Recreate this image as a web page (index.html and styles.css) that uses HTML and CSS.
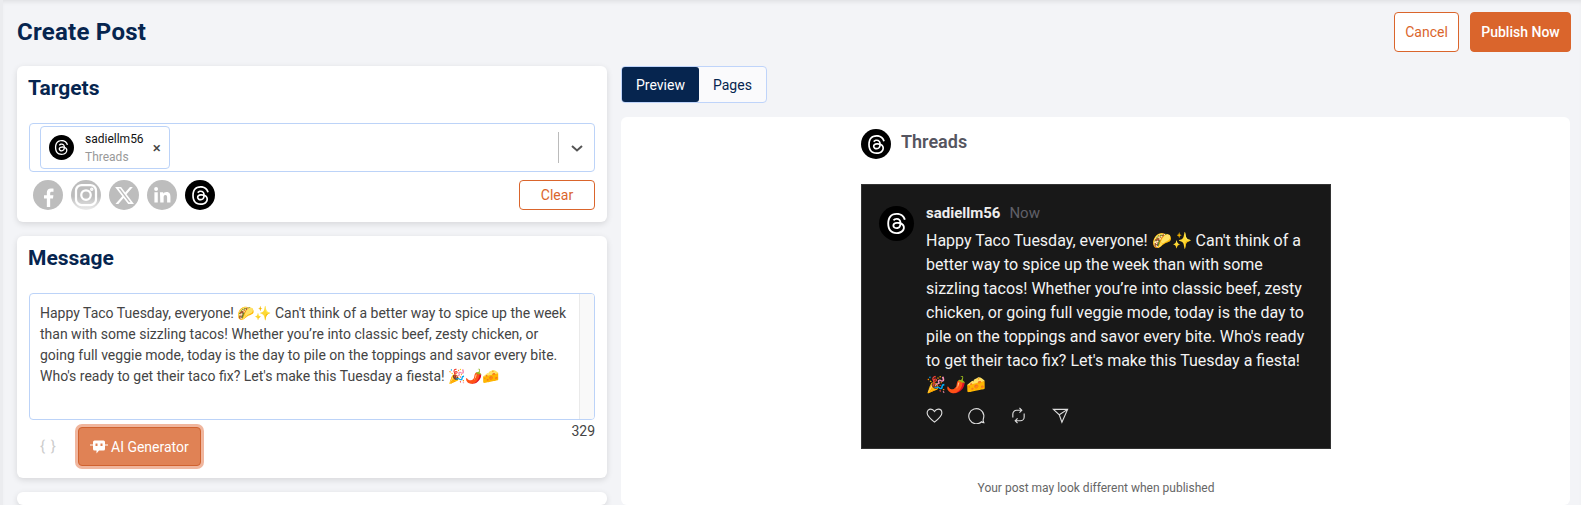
FILE: index.html
```html
<!DOCTYPE html>
<html lang="en">
<head>
  <meta charset="UTF-8" />
  <title>Create Post</title>
  <link rel="stylesheet" href="styles.css">
</head>
<body>
  <svg class="defs" width="0" height="0">
    <symbol id="threads" viewBox="0 0 24 24">
      <path fill="currentColor" d="M12.186 24h-.007c-3.581-.024-6.334-1.205-8.184-3.509C2.35 18.44 1.5 15.586 1.472 12.01v-.017c.03-3.579.879-6.43 2.525-8.482C5.845 1.205 8.6.024 12.18 0h.014c2.746.02 5.043.725 6.826 2.098 1.677 1.29 2.858 3.13 3.509 5.467l-2.04.569c-1.104-3.96-3.898-5.984-8.304-6.015-2.91.022-5.11.936-6.54 2.717C4.307 6.504 3.616 8.914 3.589 12c.027 3.086.718 5.496 2.057 7.164 1.43 1.783 3.631 2.698 6.54 2.717 2.623-.02 4.358-.631 5.8-2.045 1.647-1.613 1.618-3.593 1.09-4.798-.31-.71-.873-1.3-1.634-1.75-.192 1.352-.622 2.446-1.284 3.272-.886 1.102-2.14 1.704-3.73 1.79-1.202.065-2.361-.218-3.259-.801-1.063-.689-1.685-1.74-1.752-2.964-.065-1.19.408-2.285 1.33-3.082.88-.76 2.119-1.207 3.583-1.291a13.853 13.853 0 0 1 3.02.142c-.126-.742-.375-1.332-.75-1.757-.513-.586-1.308-.883-2.359-.89h-.029c-.844 0-1.992.232-2.721 1.32L7.734 7.847c.98-1.454 2.568-2.256 4.478-2.256h.044c3.194.02 5.097 1.975 5.287 5.388.108.046.216.094.321.142 1.49.7 2.58 1.761 3.154 3.07.797 1.82.871 4.79-1.548 7.158-1.85 1.81-4.094 2.628-7.277 2.65Zm1.003-11.69c-.242 0-.487.007-.739.021-1.836.103-2.98.946-2.916 2.143.067 1.256 1.452 1.839 2.784 1.767 1.224-.065 2.818-.543 3.086-3.71a10.5 10.5 0 0 0-2.215-.221z"/>
    </symbol>
  </svg>

  <header class="page-header">
    <h1>Create Post</h1>
    <div class="page-actions">
      <button class="btn btn-outline btn-cancel">Cancel</button>
      <button class="btn btn-solid">Publish Now</button>
    </div>
  </header>

  <main class="columns">
    <section class="left-col">
      <div class="card targets">
        <h2>Targets</h2>
        <div class="select-box">
          <div class="chip">
            <span class="logo logo-chip"><svg><use href="#threads"/></svg></span>
            <span class="chip-text">
              <span class="chip-name">sadiellm56</span>
              <span class="chip-type">Threads</span>
            </span>
            <span class="chip-remove">×</span>
          </div>
          <span class="select-divider"></span>
          <svg class="chevron" width="16" height="16" viewBox="0 0 16 16"><path d="M3 6l5 4.500L13 6" fill="none" stroke="#555" stroke-width="2"/></svg>
        </div>
        <div class="network-row">
          <div class="networks">
            <span class="logo logo-net off icon-fb">
              <svg viewBox="0 0 24 24"><path fill="#fff" d="M13.600 21v-8h2.700l.4-3.200h-3.100V7.900c0-.9.3-1.500 1.600-1.500h1.600V3.500c-.3 0-1.300-.1-2.400-.1-2.400 0-4 1.400-4 4.100v2.300H7.700v3.200h2.700v8z"/></svg>
            </span>
            <span class="logo logo-net off insta">
              <svg viewBox="0 0 24 24" fill="none" stroke="#fff" stroke-width="1.800"><rect x="4" y="4" width="16" height="16" rx="4.500"/><circle cx="12" cy="12" r="3.800"/><circle cx="16.600" cy="7.400" r=".5" fill="#fff"/></svg>
            </span>
            <span class="logo logo-net off icon-x">
              <svg viewBox="0 0 24 24"><path fill="#fff" d="M18.244 2.25h3.308l-7.227 8.26 8.502 11.24H16.17l-5.214-6.817L4.99 21.75H1.68l7.73-8.835L1.254 2.25H8.08l4.713 6.231zm-1.161 17.52h1.833L7.084 4.126H5.117z"/></svg>
            </span>
            <span class="logo logo-net off icon-in">
              <svg viewBox="0 0 24 24"><path fill="#fff" d="M5 9.500h3.100V19H5zM6.550 4.700a1.800 1.800 0 1 1 0 3.600 1.800 1.800 0 0 1 0-3.600zM10.100 9.500h3v1.300c.5-.8 1.500-1.600 3-1.600 3.100 0 3.700 2 3.700 4.700V19h-3.100v-4.500c0-1.100 0-2.500-1.500-2.500s-1.700 1.200-1.700 2.400V19h-3.100z"/></svg>
            </span>
            <span class="logo logo-net"><svg><use href="#threads"/></svg></span>
          </div>
          <button class="btn btn-outline btn-clear">Clear</button>
        </div>
      </div>

      <div class="card message">
        <h2>Message</h2>
        <div class="message-input">
          <div class="message-text">Happy Taco Tuesday, everyone! 🌮✨ Can't think of a better way to spice up the week than with some sizzling tacos! Whether you’re into classic beef, zesty chicken, or going full veggie mode, today is the day to pile on the toppings and savor every bite. Who's ready to get their taco fix? Let's make this Tuesday a fiesta! 🎉🌶️🧀</div>
          <div class="message-track"></div>
        </div>
        <div class="message-tools">
          <span class="braces">{ }</span>
          <button class="btn-ai">
            <svg width="18" height="18" viewBox="0 0 18 18"><path fill="#fff" d="M4.500 2.500h9A1.500 1.500 0 0 1 15 4v7a1.500 1.500 0 0 1-1.500 1.500H9L6.500 15.500v-3h-2A1.500 1.500 0 0 1 3 11V4a1.500 1.500 0 0 1 1.500-1.500z"/><path fill="#e08255" d="M5.500 5.500h2v2.500h-2zM10.500 5.500h2v2.500h-2z"/><path stroke="#fff" stroke-width="1.200" d="M0 7h3M15 7h3"/></svg>
            AI Generator
          </button>
          <span class="char-count">329</span>
        </div>
      </div>

      <div class="card empty"></div>
    </section>

    <section class="right-col">
      <div class="tabs">
        <button class="tab tab-active">Preview</button>
        <button class="tab">Pages</button>
      </div>
      <div class="preview-card">
        <div class="preview-inner">
          <div class="preview-head">
            <span class="logo logo-net"><svg><use href="#threads"/></svg></span>
            <span class="preview-name">Threads</span>
          </div>
          <article class="post">
            <span class="logo logo-avatar"><svg><use href="#threads"/></svg></span>
            <div class="post-main">
              <div class="post-meta"><strong>sadiellm56</strong><span>Now</span></div>
              <p>Happy Taco Tuesday, everyone! 🌮✨ Can't think of a better way to spice up the week than with some sizzling tacos! Whether you’re into classic beef, zesty chicken, or going full veggie mode, today is the day to pile on the toppings and savor every bite. Who's ready to get their taco fix? Let's make this Tuesday a fiesta! 🎉🌶️🧀</p>
              <div class="post-actions">
                <svg viewBox="0 0 18 18"><path d="M9 16C4 12 1.200 9.500 1.200 6.300 1.200 3.800 3 2.200 5 2.200c1.600 0 3 .9 4 2.500 1-1.600 2.400-2.500 4-2.500 2 0 3.800 1.600 3.800 4.100C16.800 9.500 14 12 9 16z"/></svg>
                <svg viewBox="0 0 18 18"><path d="M16.800 16.600c-.9 0-1.700-.3-2.500-1A8 8 0 1 1 16.800 9c0 2.500-.8 4-.8 5 0 .8.3 1.700.8 2.600z"/></svg>
                <svg viewBox="0 0 18 18"><path d="M3 11V7.500a4 4 0 0 1 4-4h5M10 1l2.500 2.500L10 6M15 7v3.500a4 4 0 0 1-4 4H6M8 17l-2.500-2.500L8 12"/></svg>
                <svg viewBox="0 0 18 18"><path d="M1.500 2.500h15L10.500 16 7.700 8.200zM7.700 8.200l8.800-5.700"/></svg>
              </div>
            </div>
          </article>
          <p class="preview-note">Your post may look different when published</p>
        </div>
      </div>
    </section>
  </main>
</body>
</html>
```

FILE: styles.css
```css
* {
  box-sizing: border-box;
}

html {
  overflow: hidden;
}

body {
  margin: 0;
  height: 505px;
  overflow: hidden;
  font-family: Roboto, sans-serif;
  background: #f3f4f7;
  border-left: 3px solid #ebecef;
  box-shadow: inset 0 4px 4px -2px rgba(0, 0, 0, 0.08);
}

.defs {
  position: absolute;
}

button {
  font-family: inherit;
}

h1,
h2,
p {
  margin: 0;
}

.page-header {
  display: flex;
  justify-content: space-between;
  align-items: center;
  height: 40px;
  margin: 12px 10px 14px 14px;
}

.page-header h1 {
  font-size: 24px;
  font-weight: 700;
  letter-spacing: 0.25px;
  color: #06254f;
}

.page-actions {
  display: flex;
  gap: 11px;
}

.btn {
  height: 40px;
  padding: 0 12px;
  font-size: 14px;
  border-radius: 4px;
  border: 1px solid #da652c;
  cursor: pointer;
}

.btn-outline {
  background: #fff;
  color: #da652c;
}

.btn-cancel {
  width: 65px;
  padding: 0;
}

.btn-solid {
  width: 101px;
  padding: 0;
  background: #da652c;
  color: #fff;
  font-weight: 500;
}

.btn-clear {
  width: 76px;
  height: 30px;
  padding: 0;
}

.columns {
  display: flex;
  gap: 14px;
  margin-left: 14px;
  margin-right: 11px;
}

.left-col {
  width: 590px;
  flex-shrink: 0;
  display: flex;
  flex-direction: column;
  gap: 14px;
}

.card {
  background: #fff;
  border-radius: 6px;
  box-shadow: 0 2px 6px rgba(0, 0, 0, 0.12);
  padding: 10px 12px 12px;
}

.card h2 {
  font-size: 21px;
  font-weight: 700;
  line-height: 24px;
  color: #06254f;
  margin-left: -1px;
}

.targets {
  height: 156px;
}

.select-box {
  display: flex;
  align-items: center;
  height: 49px;
  margin-top: 23px;
  padding: 0 9px 0 10px;
  border: 1px solid #bcd3f8;
  border-radius: 4px;
}

.chip {
  display: flex;
  align-items: center;
  width: 130px;
  height: 43px;
  padding: 0 8px;
  border: 1px solid #bcd3f8;
  border-radius: 4px;
}

.logo {
  display: flex;
  align-items: center;
  justify-content: center;
  flex-shrink: 0;
  border-radius: 50%;
  background: #000;
  color: #fff;
}

.logo-chip {
  width: 25px;
  height: 25px;
}

.logo-chip svg {
  width: 15px;
  height: 15px;
}

.chip-text {
  display: flex;
  flex-direction: column;
  gap: 4px;
  margin-left: 11px;
  font-size: 12px;
  line-height: 14px;
  color: #111;
}

.chip-type {
  color: #999;
}

.chip-remove {
  margin-left: 9px;
  font-size: 15px;
  font-weight: 500;
  color: #444;
}

.select-divider {
  width: 1px;
  height: 31px;
  margin-left: auto;
  background: #bbb;
}

.chevron {
  margin-left: 10px;
}

.network-row {
  display: flex;
  justify-content: space-between;
  align-items: center;
  margin-top: 8px;
}

.networks {
  display: flex;
  gap: 8px;
  padding-left: 4px;
}

.logo-net {
  width: 30px;
  height: 30px;
  overflow: hidden;
}

.logo-net svg {
  width: 19px;
  height: 19px;
  flex-shrink: 0;
}

.logo-net.off {
  background: #bdbdbd;
}

.icon-fb svg {
  width: 25px;
  height: 25px;
  margin-top: 5px;
}

.logo-net.insta {
  background: linear-gradient(#bdbdbd 55%, #ececec);
}

.insta svg {
  width: 30px;
  height: 30px;
}

.icon-x svg {
  width: 21px;
  height: 21px;
}

.icon-in svg {
  width: 26px;
  height: 26px;
}

.message {
  height: 242px;
}

.message-input {
  display: flex;
  height: 127px;
  margin-top: 23px;
  border: 1px solid #bcd3f8;
  border-radius: 4px;
  overflow: hidden;
}

.message-text {
  flex: 1;
  padding: 9px 10px;
  font-size: 14px;
  line-height: 21px;
  color: #444;
}

.message-track {
  width: 15px;
  background: #f9f9f9;
  border-left: 1px solid #eaeaea;
}

.message-tools {
  display: flex;
  align-items: flex-start;
  margin-top: 1px;
  padding-left: 11px;
}

.braces {
  width: 23px;
  margin-top: 15px;
  font-size: 15px;
  line-height: 20px;
  word-spacing: 2px;
  white-space: nowrap;
  color: #ccc;
}

.btn-ai {
  display: flex;
  align-items: center;
  gap: 3px;
  width: 123px;
  height: 39px;
  margin: 6px 0 0 15px;
  padding: 0 0 0 11px;
  background: #e08255;
  color: #fff;
  font-size: 14px;
  border: 1px solid #d0622f;
  border-radius: 4px;
  box-shadow: 0 0 0 3px #f0b69e;
  cursor: pointer;
}

.char-count {
  margin-left: auto;
  font-size: 14px;
  line-height: 20px;
  color: #444;
}

.empty {
  height: 13px;
  padding: 0;
}

.right-col {
  flex: 1;
}

.tabs {
  display: inline-flex;
  height: 37px;
  border: 1px solid #bfd4fa;
  border-radius: 4px;
  background: #fafafc;
  vertical-align: top;
}

.tab {
  padding: 0 14px;
  border: none;
  background: none;
  border-radius: 3px;
  font-size: 14px;
  color: #06254f;
  cursor: pointer;
}

.tab-active {
  width: 77px;
  background: #06254f;
  color: #fff;
}

.preview-card {
  height: 388px;
  margin-top: 14px;
  background: #fff;
  border-radius: 6px;
  padding-top: 12px;
}

.preview-inner {
  width: 470px;
  margin-left: 240px;
}

.preview-head {
  display: flex;
  align-items: center;
  gap: 10px;
}

.preview-name {
  margin-top: -5px;
  font-size: 18px;
  font-weight: 600;
  color: #555560;
}

.post {
  display: flex;
  gap: 12px;
  height: 265px;
  margin-top: 25px;
  padding: 19px 17px;
  background: #181818;
  border: 1px solid #333;
}

.logo-avatar {
  width: 35px;
  height: 35px;
  margin-top: 2px;
}

.logo-avatar svg {
  width: 21px;
  height: 21px;
}

.post-main {
  flex: 1;
}

.post-meta {
  display: flex;
  align-items: baseline;
  gap: 9px;
  line-height: 18px;
  font-size: 15px;
  color: #eee;
}

.post-meta span {
  color: #606068;
}

.post-main p {
  margin-top: 7px;
  font-size: 16px;
  line-height: 24px;
  color: #f3f3f3;
}

.post-actions {
  display: flex;
  gap: 25px;
  margin-top: 10px;
}

.post-actions svg {
  width: 17px;
  height: 17px;
  fill: none;
  stroke: #ddd;
  stroke-width: 1.2;
}

.preview-note {
  margin-top: 32px;
  text-align: center;
  font-size: 12px;
  color: #666;
}
```
